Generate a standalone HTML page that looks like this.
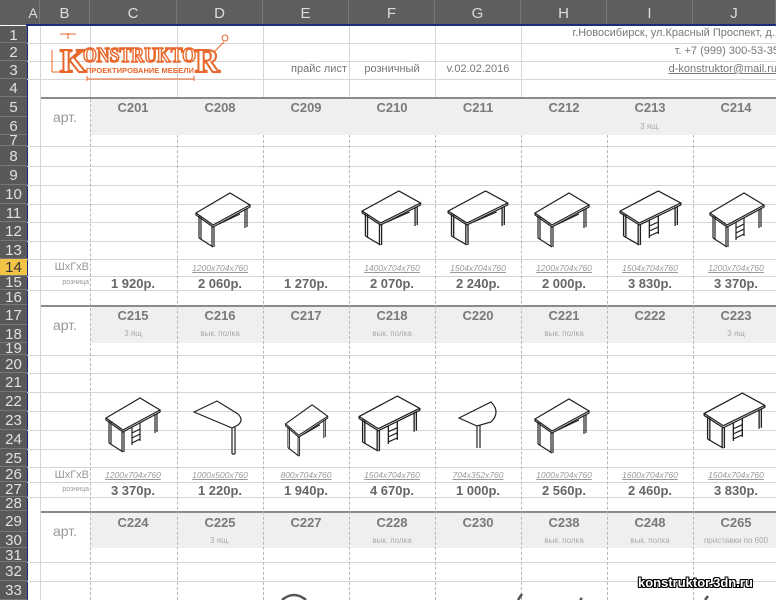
<!DOCTYPE html>
<html><head><meta charset="utf-8"><style>
*{margin:0;padding:0;box-sizing:border-box}
body{width:776px;height:600px;overflow:hidden;background:#fff;font-family:"Liberation Sans",sans-serif;position:relative}
.a{position:absolute}
.h{position:absolute;left:27px;right:0;height:1px;background:#d6d6d6}
.v{position:absolute;width:0;border-left:1px dashed #b8b8b8}
.vs{position:absolute;width:1px;background:#d6d6d6}
.band{position:absolute;left:90px;right:0;background:#efefef}
.ch{position:absolute;top:0;height:25px;background:#5e5e5e;color:#ddd;font-size:15px;text-align:center;line-height:27px;border-right:1px solid #777}
.rh{position:absolute;left:0;width:27px;background:#595959;color:#e0e0e0;font-size:15px;text-align:center;border-bottom:1px solid #777}
.t{position:absolute;width:86px;text-align:center;white-space:nowrap}
.art{font-weight:bold;color:#7a7a7a;font-size:13px}
.sub{color:#aaa;font-size:8px}
.dim{color:#999;font-size:8.5px;font-style:italic;text-decoration:underline}
.pr{font-weight:bold;color:#666;font-size:13px}
.lbl{position:absolute;left:40px;width:50px;text-align:center;color:#999}
</style></head><body>
<svg width="0" height="0" style="position:absolute"><defs>
<g id="desk" fill="none" stroke="#222" stroke-width="1.2">
<path d="M2,23 L36,3 L56,15 L19,35 Z M2,23 L2,25 L19,37 L56,17 L56,15"/>
<path d="M5,26 L5,48 M7,27 L7,49 M5,48 L19,57 M18,37 L18,57 M20,37 L20,57 M51,19 L51,38 M53,18 L53,37 M25,34 L46,24"/>
</g>
<g id="desk3" fill="none" stroke="#222" stroke-width="1.2">
<path d="M2,23 L36,3 L56,15 L19,35 Z M2,23 L2,25 L19,37 L56,17 L56,15"/>
<path d="M5,26 L5,48 M7,27 L7,49 M5,48 L19,57 M18,37 L18,57 M20,37 L20,57 M51,19 L51,38 M53,18 L53,37 M28,32 L28,50 M36,28 L36,46 M28,38 L36,34 M28,43 L36,39 M28,48 L36,44"/>
</g>
<g id="ret" fill="none" stroke="#222" stroke-width="1.2">
<path d="M2,14 L25,3 L46,16 Q52,22 46,27 L40,30 Z M40,30 L40,56 M43,29 L43,56 M40,56 L43,56"/>
</g>
<g id="half" fill="none" stroke="#222" stroke-width="1.2">
<path d="M4,20 L36,4 Q46,14 36,24 L22,28 Z M22,28 L22,50 M25,27 L25,50"/>
</g>
</defs></svg>

<div class="a" style="left:0;top:0;width:776px;height:25px;background:#5e5e5e"></div>
<div class="ch" style="left:27px;width:13px;font-size:14px">A</div>
<div class="ch" style="left:40px;width:50px">B</div>
<div class="ch" style="left:90px;width:87px">C</div>
<div class="ch" style="left:177px;width:86px">D</div>
<div class="ch" style="left:263px;width:86px">E</div>
<div class="ch" style="left:349px;width:86px">F</div>
<div class="ch" style="left:435px;width:86px">G</div>
<div class="ch" style="left:521px;width:86px">H</div>
<div class="ch" style="left:607px;width:86px">I</div>
<div class="ch" style="left:693px;width:83px">J</div>
<div class="a" style="left:0;top:0;width:27px;height:25px;background:#5e5e5e"></div>
<div class="a" style="left:27px;top:24px;right:0;height:2px;background:#1e2a80"></div>
<div class="a" style="left:26px;top:24px;width:2px;height:576px;background:#1e2a80"></div>

<div class="band" style="top:97px;height:38px"></div>
<div class="band" style="top:305px;height:38px"></div>
<div class="band" style="top:511px;height:37px"></div>

<div class="h" style="top:43px"></div><div class="h" style="top:61px"></div><div class="h" style="top:79px"></div>
<div class="a" style="left:40px;right:0;top:97px;height:2px;background:#8a8a8a"></div>
<div class="h" style="top:146px"></div><div class="h" style="top:166px"></div><div class="h" style="top:185px"></div><div class="h" style="top:204px"></div><div class="h" style="top:222px"></div><div class="h" style="top:241px"></div><div class="h" style="top:259px"></div><div class="h" style="top:276px"></div><div class="h" style="top:290px"></div>
<div class="a" style="left:40px;right:0;top:305px;height:2px;background:#8a8a8a"></div>
<div class="h" style="top:355px"></div><div class="h" style="top:373px"></div><div class="h" style="top:392px"></div><div class="h" style="top:411px"></div><div class="h" style="top:430px"></div><div class="h" style="top:449px"></div><div class="h" style="top:467px"></div><div class="h" style="top:482px"></div><div class="h" style="top:497px"></div>
<div class="a" style="left:40px;right:0;top:511px;height:2px;background:#8a8a8a"></div>
<div class="h" style="top:562px"></div><div class="h" style="top:581px"></div>

<div class="vs" style="left:40px;top:26px;height:574px"></div>
<div class="vs" style="left:90px;top:26px;height:71px"></div>
<div class="vs" style="left:177px;top:26px;height:71px"></div>
<div class="vs" style="left:263px;top:26px;height:71px"></div>
<div class="vs" style="left:349px;top:26px;height:71px"></div>
<div class="vs" style="left:435px;top:26px;height:71px"></div>
<div class="vs" style="left:521px;top:26px;height:71px"></div>
<div class="v" style="left:90px;top:99px;height:501px"></div>
<div class="v" style="left:177px;top:135px;height:465px"></div>
<div class="v" style="left:263px;top:135px;height:465px"></div>
<div class="v" style="left:349px;top:135px;height:465px"></div>
<div class="v" style="left:435px;top:135px;height:465px"></div>
<div class="v" style="left:521px;top:135px;height:465px"></div>
<div class="v" style="left:607px;top:135px;height:465px"></div>
<div class="v" style="left:693px;top:135px;height:465px"></div>

<div class="rh" style="top:26px;height:17px;line-height:19px">1</div>
<div class="rh" style="top:43px;height:18px;line-height:19px">2</div>
<div class="rh" style="top:61px;height:18px;line-height:19px">3</div>
<div class="rh" style="top:79px;height:18px;line-height:19px">4</div>
<div class="rh" style="top:97px;height:20px;line-height:21px">5</div>
<div class="rh" style="top:117px;height:18px;line-height:19px">6</div>
<div class="rh" style="top:135px;height:11px;line-height:11px">7</div>
<div class="rh" style="top:146px;height:20px;line-height:21px">8</div>
<div class="rh" style="top:166px;height:19px;line-height:20px">9</div>
<div class="rh" style="top:185px;height:19px;line-height:20px">10</div>
<div class="rh" style="top:204px;height:18px;line-height:19px">11</div>
<div class="rh" style="top:222px;height:19px;line-height:20px">12</div>
<div class="rh" style="top:241px;height:18px;line-height:19px">13</div>
<div class="rh" style="top:259px;height:17px;line-height:18px;background:#f3c445;color:#333">14</div>
<div class="rh" style="top:276px;height:14px;line-height:14px">15</div>
<div class="rh" style="top:290px;height:15px;line-height:16px">16</div>
<div class="rh" style="top:305px;height:20px;line-height:21px">17</div>
<div class="rh" style="top:325px;height:18px;line-height:19px">18</div>
<div class="rh" style="top:343px;height:12px;line-height:12px">19</div>
<div class="rh" style="top:355px;height:18px;line-height:19px">20</div>
<div class="rh" style="top:373px;height:19px;line-height:20px">21</div>
<div class="rh" style="top:392px;height:19px;line-height:20px">22</div>
<div class="rh" style="top:411px;height:19px;line-height:20px">23</div>
<div class="rh" style="top:430px;height:19px;line-height:20px">24</div>
<div class="rh" style="top:449px;height:18px;line-height:19px">25</div>
<div class="rh" style="top:467px;height:15px;line-height:16px">26</div>
<div class="rh" style="top:482px;height:15px;line-height:16px">27</div>
<div class="rh" style="top:497px;height:14px;line-height:14px">28</div>
<div class="rh" style="top:511px;height:21px;line-height:22px">29</div>
<div class="rh" style="top:532px;height:16px;line-height:17px">30</div>
<div class="rh" style="top:548px;height:14px;line-height:15px">31</div>
<div class="rh" style="top:562px;height:19px;line-height:20px">32</div>
<div class="rh" style="top:581px;height:19px;line-height:20px">33</div>

<svg class="a" style="left:48px;top:30px" width="185" height="52" viewBox="0 0 185 52">
<g fill="none" stroke="#e8672a" stroke-width="1">
<path d="M20,3 L20,9 M12,4 L28,4 M4,20 L4,42 M4,42 L12,42 M39,46 L39,51 M146,46 L146,51 M39,49 L146,49 M176,12 L166,22"/>
<circle cx="177" cy="8" r="3"/>
</g>
<text x="12" y="42" font-family="Liberation Serif,serif" font-weight="bold" font-size="34" fill="#fff" stroke="#e8672a" stroke-width="2">K</text>
<text x="35" y="32" font-family="Liberation Serif,serif" font-weight="bold" font-size="21" fill="#fff" stroke="#e8672a" stroke-width="1.6" textLength="113" lengthAdjust="spacingAndGlyphs">ONSTRUKTO</text>
<text x="147" y="42" font-family="Liberation Serif,serif" font-weight="bold" font-size="34" fill="#fff" stroke="#e8672a" stroke-width="2">R</text>
<text x="38" y="43" font-family="Liberation Sans,sans-serif" font-weight="bold" font-size="7.5" fill="#e8672a" textLength="108">ПРОЕКТИРОВАНИЕ МЕБЕЛИ</text>
</svg>

<div class="a" style="left:263px;width:86px;top:63px;text-align:right;padding-right:2px;font-size:11px;color:#777">прайс лист</div>
<div class="a" style="left:349px;width:86px;top:63px;text-align:center;font-size:11px;color:#777">розничный</div>
<div class="a" style="left:435px;width:86px;top:63px;text-align:center;font-size:11px;color:#777">v.02.02.2016</div>
<div class="a" style="left:521px;width:260px;top:27px;text-align:right;font-size:11px;color:#777;white-space:nowrap">г.Новосибирск, ул.Красный Проспект, д.1</div>
<div class="a" style="left:521px;width:258px;top:45px;text-align:right;font-size:11px;color:#777;white-space:nowrap">т. +7 (999) 300-53-35</div>
<div class="a" style="left:521px;width:256px;top:63px;text-align:right;font-size:11px;color:#777;text-decoration:underline;white-space:nowrap">d-konstruktor@mail.ru</div>

<div class="lbl" style="top:109px;font-size:14px">арт.</div>
<div class="lbl" style="top:261px;font-size:11px;width:49px;text-align:right">ШxГxВ</div>
<div class="lbl" style="top:279px;font-size:7px;width:49px;text-align:right">розница</div>
<div class="lbl" style="top:317px;font-size:14px">арт.</div>
<div class="lbl" style="top:469px;font-size:11px;width:49px;text-align:right">ШxГxВ</div>
<div class="lbl" style="top:486px;font-size:7px;width:49px;text-align:right">розница</div>
<div class="lbl" style="top:523px;font-size:14px">арт.</div>

<div class="t art" style="left:90px;top:100px">C201</div>
<div class="t art" style="left:177px;top:100px">C208</div>
<div class="t art" style="left:263px;top:100px">C209</div>
<div class="t art" style="left:349px;top:100px">C210</div>
<div class="t art" style="left:435px;top:100px">C211</div>
<div class="t art" style="left:521px;top:100px">C212</div>
<div class="t art" style="left:607px;top:100px">C213</div>
<div class="t art" style="left:693px;top:100px">C214</div>
<div class="t sub" style="left:607px;top:122px">3 ящ.</div>
<div class="t dim" style="left:177px;top:263px">1200x704x760</div>
<div class="t dim" style="left:349px;top:263px">1400x704x760</div>
<div class="t dim" style="left:435px;top:263px">1504x704x760</div>
<div class="t dim" style="left:521px;top:263px">1200x704x760</div>
<div class="t dim" style="left:607px;top:263px">1504x704x760</div>
<div class="t dim" style="left:693px;top:263px">1200x704x760</div>
<div class="t pr" style="left:90px;top:276px">1 920р.</div>
<div class="t pr" style="left:177px;top:276px">2 060р.</div>
<div class="t pr" style="left:263px;top:276px">1 270р.</div>
<div class="t pr" style="left:349px;top:276px">2 070р.</div>
<div class="t pr" style="left:435px;top:276px">2 240р.</div>
<div class="t pr" style="left:521px;top:276px">2 000р.</div>
<div class="t pr" style="left:607px;top:276px">3 830р.</div>
<div class="t pr" style="left:693px;top:276px">3 370р.</div>
<svg class="a" style="left:194px;top:190px" width="60" height="60"><use href="#desk"/></svg>
<svg class="a" style="left:360px;top:188px" width="66" height="60"><use href="#desk" transform="scale(1.08,1)"/></svg>
<svg class="a" style="left:446px;top:188px" width="66" height="60"><use href="#desk" transform="scale(1.1,1)"/></svg>
<svg class="a" style="left:533px;top:190px" width="60" height="60"><use href="#desk"/></svg>
<svg class="a" style="left:618px;top:188px" width="68" height="60"><use href="#desk3" transform="scale(1.12,1)"/></svg>
<svg class="a" style="left:708px;top:190px" width="68" height="60"><use href="#desk3"/></svg>

<div class="t art" style="left:90px;top:308px">C215</div>
<div class="t art" style="left:177px;top:308px">C216</div>
<div class="t art" style="left:263px;top:308px">C217</div>
<div class="t art" style="left:349px;top:308px">C218</div>
<div class="t art" style="left:435px;top:308px">C220</div>
<div class="t art" style="left:521px;top:308px">C221</div>
<div class="t art" style="left:607px;top:308px">C222</div>
<div class="t art" style="left:693px;top:308px">C223</div>
<div class="t sub" style="left:90px;top:329px">3 ящ</div>
<div class="t sub" style="left:177px;top:329px">вык. полка</div>
<div class="t sub" style="left:349px;top:329px">вык. полка</div>
<div class="t sub" style="left:521px;top:329px">вык. полка</div>
<div class="t sub" style="left:693px;top:329px">3 ящ</div>
<div class="t dim" style="left:90px;top:470px">1200x704x760</div>
<div class="t dim" style="left:177px;top:470px">1000x500x760</div>
<div class="t dim" style="left:263px;top:470px">800x704x760</div>
<div class="t dim" style="left:349px;top:470px">1504x704x760</div>
<div class="t dim" style="left:435px;top:470px">704x352x760</div>
<div class="t dim" style="left:521px;top:470px">1000x704x760</div>
<div class="t dim" style="left:607px;top:470px">1600x704x760</div>
<div class="t dim" style="left:693px;top:470px">1504x704x760</div>
<div class="t pr" style="left:90px;top:483px">3 370р.</div>
<div class="t pr" style="left:177px;top:483px">1 220р.</div>
<div class="t pr" style="left:263px;top:483px">1 940р.</div>
<div class="t pr" style="left:349px;top:483px">4 670р.</div>
<div class="t pr" style="left:435px;top:483px">1 000р.</div>
<div class="t pr" style="left:521px;top:483px">2 560р.</div>
<div class="t pr" style="left:607px;top:483px">2 460р.</div>
<div class="t pr" style="left:693px;top:483px">3 830р.</div>
<svg class="a" style="left:104px;top:395px" width="60" height="60"><use href="#desk3"/></svg>
<svg class="a" style="left:192px;top:398px" width="60" height="60"><use href="#ret"/></svg>
<svg class="a" style="left:284px;top:402px" width="50" height="60"><use href="#desk" transform="scale(0.78,0.95)"/></svg>
<svg class="a" style="left:357px;top:393px" width="68" height="62"><use href="#desk3" transform="scale(1.12,1.02)"/></svg>
<svg class="a" style="left:455px;top:398px" width="50" height="60"><use href="#half"/></svg>
<svg class="a" style="left:533px;top:396px" width="60" height="60"><use href="#desk"/></svg>
<svg class="a" style="left:702px;top:390px" width="74" height="62"><use href="#desk3" transform="scale(1.12,1.02)"/></svg>

<div class="t art" style="left:90px;top:515px">C224</div>
<div class="t art" style="left:177px;top:515px">C225</div>
<div class="t art" style="left:263px;top:515px">C227</div>
<div class="t art" style="left:349px;top:515px">C228</div>
<div class="t art" style="left:435px;top:515px">C230</div>
<div class="t art" style="left:521px;top:515px">C238</div>
<div class="t art" style="left:607px;top:515px">C248</div>
<div class="t art" style="left:693px;top:515px">C265</div>
<div class="t sub" style="left:177px;top:536px">3 ящ.</div>
<div class="t sub" style="left:349px;top:536px">вык. полка</div>
<div class="t sub" style="left:521px;top:536px">вык. полка</div>
<div class="t sub" style="left:607px;top:536px">вык. полка</div>
<div class="t sub" style="left:693px;top:536px">приставки по 600</div>

<svg class="a" style="left:270px;top:588px" width="500" height="12" fill="none" stroke="#555" stroke-width="2.5">
<path d="M12,12 Q24,2 36,12"/><path d="M248,12 L252,6"/><path d="M310,12 L312,10"/><path d="M435,12 L438,8"/>
</svg>
<div class="a" style="left:638px;top:575px;font-size:13px;font-weight:bold;color:#fff;white-space:nowrap;text-shadow:-1px -1px 0 #000,1px -1px 0 #000,-1px 1px 0 #000,1px 1px 0 #000,0 1px 0 #000,0 -1px 0 #000,1px 0 0 #000,-1px 0 0 #000">konstruktor.3dn.ru</div>
</body></html>
